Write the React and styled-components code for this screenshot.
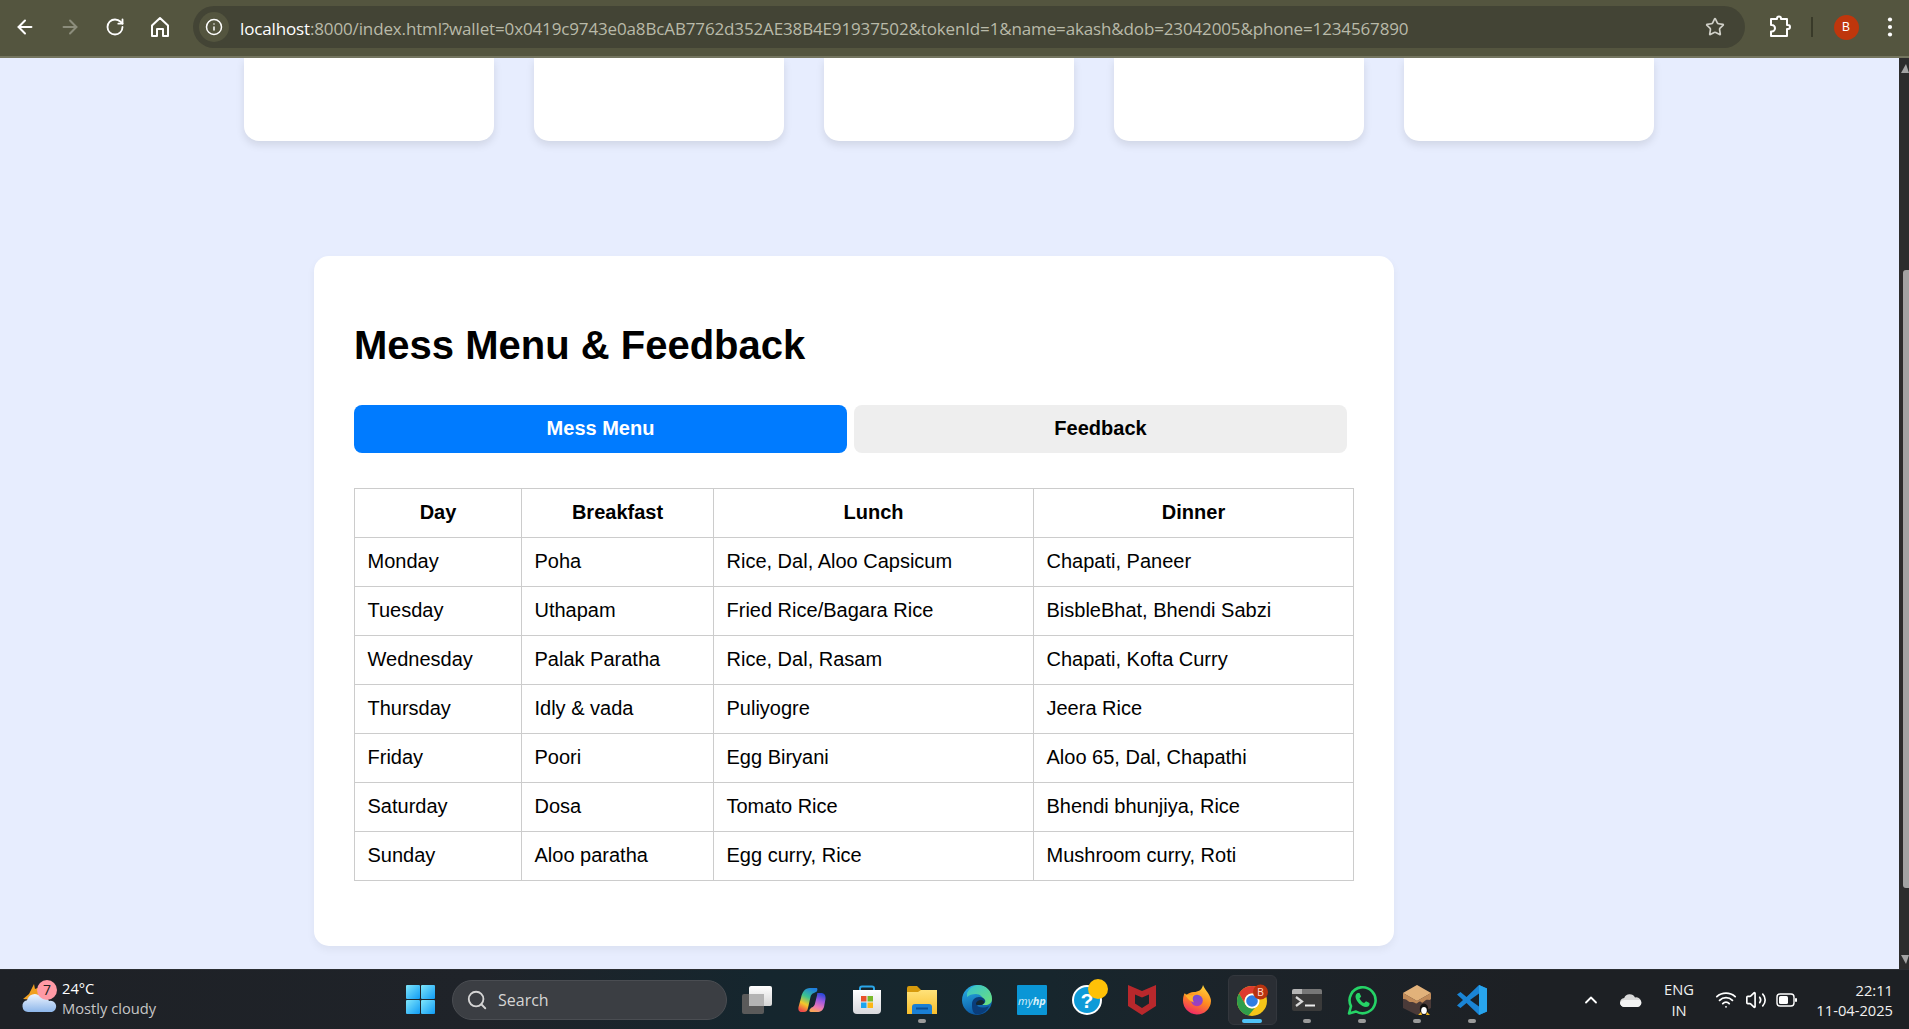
import React from "react";
import styled, { createGlobalStyle } from "styled-components";
import { ArrowLeft, ArrowRight, RotateCw, Info, Star, Search as SearchGlyph, ChevronUp, Wifi, Volume2 } from "lucide-react";

const Global = createGlobalStyle`
  html, body { margin: 0; padding: 0; height: 100%; overflow: hidden; }
  #root { height: 100%; }
  * { box-sizing: border-box; }
`;

const Shell = styled.div`
  width: 1909px; height: 1029px; display: flex; flex-direction: column;
  font-family: "Liberation Sans", Arial, sans-serif; background: #e7edfe;
`;

/* browser toolbar */
const Toolbar = styled.header`
  height: 58px; flex: none; display: flex; align-items: center; padding: 0 0 2px 2.5px;
  background: #54553f; border-bottom: 2px solid #74755f;
`;
const NavButton = styled.div`
  width: 45px; height: 40px; flex: none; display: flex; align-items: center; justify-content: center;
  color: ${p => (p.$dim ? "#8c8d7c" : "#ffffff")};
`;
const AddressBar = styled.div`
  width: 1552px; height: 42px; flex: none; margin-left: 10.5px; display: flex; align-items: center;
  border-radius: 21px; background: #434435; padding: 0 20px 0 6px;
`;
const SiteChip = styled.div`
  width: 30px; height: 30px; border-radius: 50%; background: #54553f; display: flex;
  align-items: center; justify-content: center; color: #fff; flex: none;
`;
const Url = styled.div`
  margin-left: 11px; flex: 1; white-space: nowrap; overflow: hidden; padding-top: 3px;
  font: 400 17px "Open Sans", sans-serif; letter-spacing: -0.14px; color: #b9baa9;
`;
const Host = styled.span` color: #ffffff; `;
const BarAction = styled.div`
  width: ${p => p.$w}px; height: 40px; flex: none; display: flex; align-items: center; justify-content: center;
  color: #fff; margin-left: ${p => p.$ml || 0}px;
`;
const Divider = styled.div` width: 2px; height: 20px; background: #393a29; flex: none; margin-left: 11px; `;
const Avatar = styled.div`
  width: 25px; height: 25px; border-radius: 50%; background: #bf360c; color: #fff;
  font: 400 12px "Liberation Sans", sans-serif; display: flex; align-items: center; justify-content: center;
`;

/* page */
const Viewport = styled.div` flex: 1; min-height: 0; display: flex; `;
const Page = styled.main` flex: 1; min-width: 0; overflow: hidden; background: #e7edfe; `;
const CardRow = styled.div` display: flex; gap: 40px; padding-left: 243.5px; `;
const StubCard = styled.div`
  width: 250px; height: 83px; background: #fff; border-radius: 0 0 15px 15px;
  box-shadow: 0 4px 8px rgba(0,0,0,0.1);
`;
const Panel = styled.section`
  width: 1080px; height: 690px; margin: 115px 0 0 314px; padding: 40px; background: #fff;
  border-radius: 15px; box-shadow: 0 4px 8px rgba(0,0,0,0.05);
`;
const Title = styled.h2`
  margin: 26px 0 37px; font: 700 40px/46px "Liberation Sans", Arial, sans-serif; color: #000;
`;
const Tabs = styled.div` display: flex; gap: 7px; `;
const Tab = styled.button`
  width: 493px; height: 48px; border: 0; border-radius: 8px; padding: 0 0 2px;
  font: 700 20px "Liberation Sans", Arial, sans-serif;
  background: ${p => (p.$active ? "#007bff" : "#eeeeee")};
  color: ${p => (p.$active ? "#ffffff" : "#000000")};
`;
const MenuTable = styled.table`
  width: 999px; margin-top: 35px; border-collapse: collapse; table-layout: fixed;
  font: 400 20px "Liberation Sans", Arial, sans-serif; color: #000;
`;
const HeadCell = styled.th`
  height: 49px; padding: 0 12.5px 1px; border: 1px solid #ccc; font-weight: 700; text-align: center;
`;
const Cell = styled.td`
  height: 49px; padding: 0 12.5px 1px; border: 1px solid #ccc; text-align: left;
`;

/* scrollbar */
const ScrollTrack = styled.aside`
  width: 10px; flex: none; background: #2c2c2c; display: flex; flex-direction: column;
  align-items: flex-end; padding-top: 6px;
`;
const ScrollArrow = styled.div`
  width: 0; height: 0; border-left: 5px solid transparent; border-right: 3px solid transparent;
  ${p => (p.$down ? "border-top: 9px solid #a3a3a3; margin-top: 67px;" : "border-bottom: 9px solid #a3a3a3;")}
`;
const ScrollThumb = styled.div`
  width: 6px; height: 618px; margin-top: 197px; background: #a3a3a3; border-radius: 3px 0 0 3px;
`;

/* taskbar */
const Taskbar = styled.footer`
  height: 60px; flex: none; display: flex; align-items: center; padding: 0 16px 0 22px; color: #fff;
  font-family: "Open Sans", sans-serif; border-top: 1px solid #2b2e33;
  background: linear-gradient(90deg, #1e2126 0%, #1f2329 25%, #15262e 40%, #17262d 55%, #1c2329 66%, #1d2024 80%, #1d2024 100%);
`;
const Weather = styled.div` width: 384px; flex: none; display: flex; align-items: center; gap: 2px; padding-bottom: 4px; `;
const WeatherText = styled.div` display: flex; flex-direction: column; font-size: 14.7px; line-height: 20px; `;
const Temp = styled.span` color: #fff; `;
const Cond = styled.span` color: #c6c6c6; `;
const Search = styled.div`
  width: 275px; height: 40px; flex: none; margin-left: 17px; border-radius: 20px; display: flex; align-items: center;
  gap: 10px; padding-left: 13px; background: #3b3e43; border: 1px solid #4a4d52; color: #d5d5d5; font-size: 16px;
`;
const Slots = styled.div` display: flex; flex: none; margin-left: 2.5px; `;
const Slot = styled.div`
  position: relative; width: 55px; height: 50px; flex: none; display: flex; align-items: center; justify-content: center;
  ${p => p.$active && `
    &::before { content: ""; position: absolute; left: 3px; right: 3px; top: 0; bottom: 0; border-radius: 6px;
      background: #2a2e34; border: 1px solid #33373d; }
  `}
  & > svg { position: relative; }
`;
const Dot = styled.span`
  position: absolute; left: 50%; bottom: 2px; transform: translateX(-50%); height: 4px; border-radius: 2px;
  width: ${p => (p.$active ? 20 : 8)}px; background: ${p => (p.$active ? "#4fc3f7" : "#9a9a9a")};
`;
const Tray = styled.div` margin-left: auto; display: flex; align-items: center; `;
const TrayIcon = styled.div`
  width: ${p => p.$w || 30}px; margin-left: ${p => p.$ml || 0}px; display: flex; justify-content: center; align-items: center; color: #fff;
`;
const Lang = styled.div`
  width: 40px; margin-left: 17px; text-align: center; font-size: 14.7px; line-height: 21px; color: #f0f0f0;
`;
const Clock = styled.div`
  width: 84px; margin-left: 12px; text-align: right; font-size: 14.7px; line-height: 20px; color: #f0f0f0;
`;

/* icon drawings */
const HomeIcon = () => (
  <svg width="20" height="22" viewBox="0 0 20 22" fill="none" stroke="#fff" strokeWidth="2" strokeLinejoin="round">
    <path d="M2 9.5 10 2l8 7.5V20h-5v-7H7v7H2z" />
  </svg>
);
const PuzzleIcon = () => (
  <svg width="24" height="24" viewBox="0 0 24 24" fill="none" stroke="#fff" strokeWidth="2" strokeLinejoin="round">
    <path d="M3 4h6V3.4a2 2 0 0 1 4 0V4h6v6h1a2 2 0 0 1 0 4h-1v7H3v-4.5h.8a3.2 3.2 0 0 0 0-6.4H3z" />
  </svg>
);
const Kebab = () => (
  <svg width="6" height="22" viewBox="0 0 6 22" fill="#fff"><circle cx="3" cy="3.5" r="2.1" /><circle cx="3" cy="11" r="2.1" /><circle cx="3" cy="18.5" r="2.1" /></svg>
);
const WeatherIcon = () => (
  <svg width="38" height="36" viewBox="0 0 38 36">
    <defs><linearGradient id="cl" x1="0" y1="0" x2="0" y2="1"><stop offset="0" stopColor="#eef5ff" /><stop offset="1" stopColor="#8db6ea" /></linearGradient></defs>
    <path d="M12 4 L13 9 L18 7 L20 14 L13 20 L1 19 L7 14 Z" fill="#f0a020" />
    <path d="M6 32a6 6 0 0 1-1-11.8A8 8 0 0 1 18 16a9 9 0 0 1 9 5 5.6 5.6 0 0 1 3 11z" fill="url(#cl)" />
    <circle cx="25" cy="10" r="10" fill="#ff9aa5" />
    <text x="25" y="15" textAnchor="middle" fontSize="14" fontFamily="Open Sans" fill="#222">7</text>
  </svg>
);
const StartLogo = () => (
  <svg width="29" height="29" viewBox="0 0 29 29">
    <defs><linearGradient id="st" x1="0" y1="0" x2="1" y2="1"><stop offset="0" stopColor="#7fe6fb" /><stop offset="1" stopColor="#0f9bf5" /></linearGradient></defs>
    <g fill="url(#st)">
      <rect x="0" y="0" width="14" height="14" rx="1" /><rect x="15" y="0" width="14" height="14" rx="1" />
      <rect x="0" y="15" width="14" height="14" rx="1" /><rect x="15" y="15" width="14" height="14" rx="1" />
    </g>
  </svg>
);
const TaskView = () => (
  <svg width="30" height="30" viewBox="0 0 30 30">
    <defs><linearGradient id="tv" x1="0" y1="0" x2="0" y2="1"><stop offset="0" stopColor="#fff" /><stop offset="1" stopColor="#d5d5d5" /></linearGradient></defs>
    <rect x="0" y="9" width="22" height="20" rx="2" fill="#5a5a5a" />
    <rect x="7" y="1" width="23" height="20" rx="2" fill="url(#tv)" />
    <rect x="7" y="9" width="15" height="12" fill="#b4b4b4" />
  </svg>
);
const Copilot = () => (
  <svg width="30" height="30" viewBox="0 0 30 30">
    <defs>
      <linearGradient id="cpa" x1="0.7" y1="0" x2="0.3" y2="1"><stop offset="0" stopColor="#1f7fe0" /><stop offset="0.4" stopColor="#3cc48e" /><stop offset="0.7" stopColor="#f5c92a" /><stop offset="1" stopColor="#ee4a4a" /></linearGradient>
      <linearGradient id="cpb" x1="0.7" y1="0" x2="0.4" y2="1"><stop offset="0" stopColor="#2647d8" /><stop offset="0.4" stopColor="#a25ade" /><stop offset="0.75" stopColor="#ee7ab0" /><stop offset="1" stopColor="#f8a45a" /></linearGradient>
    </defs>
    <path d="M13 3h6c2 0 1.500 2 .8 3.500L17 8c-2 .5-3 2-3.500 4L11 23c-.6 3-2 4-4 4H5C2 27 1 25 1.500 22L4 13C5 7 8 3 13 3z" fill="url(#cpa)" />
    <path d="M20 8h4c3 0 5 2 4.500 6l-1.500 8c-1 3-3 5-7 5h-6c-2 0-2-1.500-1-3l1.500-1.500c2-.5 3-2 3.500-4l2-8c.3-1.500 .5-2.500 0-2.500z" fill="url(#cpb)" />
  </svg>
);
const Store = () => (
  <svg width="30" height="30" viewBox="0 0 30 30">
    <defs><linearGradient id="sb" x1="0" y1="0" x2="0" y2="1"><stop offset="0" stopColor="#fff" /><stop offset="1" stopColor="#d8d8dc" /></linearGradient></defs>
    <path d="M8 7V3.500C8 2 9 1.500 10 1.500h10c1 0 2 .5 2 2V7" fill="none" stroke="#2aa6e8" strokeWidth="2" />
    <path d="M1 5h28v20a4 4 0 0 1-4 4H5a4 4 0 0 1-4-4z" fill="url(#sb)" />
    <rect x="9" y="11" width="5.500" height="5.500" fill="#e8512a" /><rect x="15.500" y="11" width="5.500" height="5.500" fill="#78b82a" />
    <rect x="9" y="17.500" width="5.500" height="5.500" fill="#1ea5ee" /><rect x="15.500" y="17.500" width="5.500" height="5.500" fill="#fcb614" />
  </svg>
);
const Files = () => (
  <svg width="30" height="30" viewBox="0 0 30 30">
    <defs><linearGradient id="fl" x1="0" y1="0" x2="0" y2="1"><stop offset="0" stopColor="#ffe27a" /><stop offset="1" stopColor="#f8be2c" /></linearGradient></defs>
    <path d="M0 3a2 2 0 0 1 2-2h8l4 4h14a2 2 0 0 1 2 2v3H0z" fill="#d69a0c" />
    <path d="M0 7h11l3-2h16v24H0z" fill="url(#fl)" />
    <path d="M5 29v-7a3 3 0 0 1 3-3h14a3 3 0 0 1 3 3v7z" fill="#1a7fd4" />
    <rect x="9" y="22.500" width="12" height="2" fill="#0b4f94" />
  </svg>
);
const Edge = () => (
  <svg width="30" height="30" viewBox="0 0 30 30">
    <defs>
      <linearGradient id="ed" x1="0" y1="0" x2="0.3" y2="1"><stop offset="0" stopColor="#2ab4e8" /><stop offset="1" stopColor="#0c5aa6" /></linearGradient>
      <linearGradient id="eg" x1="0" y1="0" x2="1" y2="1"><stop offset="0" stopColor="#35c1d1" /><stop offset="1" stopColor="#6ee27a" /></linearGradient>
    </defs>
    <circle cx="15" cy="15" r="15" fill="url(#ed)" />
    <path d="M5 8C8 2 13 0 16 0c8 0 14 6 14 14 0 4-3 6-7 6h-6c3-1 4-3 4-5 0-3-3-6-7-6-4 0-7 1-9 3z" fill="url(#eg)" />
    <path d="M10 19c0-4 3-7 7-7 3 0 5 1 6 3 1 2-1 4-3 5h-4c-1 0-1 1 0 1.500 3 1.500 7 1.500 11-.5-2 5-7 8.500-13 8.500-4-2-4-7-4-10.500z" fill="#0a3d7a" />
    <path d="M14 18c1-2 3-3 5-3s3 1 3 2-1 3-4 3h-3c-1 0-1-1-1-2z" fill="#15272f" />
  </svg>
);
const MyHp = () => (
  <svg width="30" height="30" viewBox="0 0 30 30">
    <rect width="30" height="30" rx="1" fill="#0a96d6" />
    <text x="15" y="19.500" textAnchor="middle" fontSize="11" fontFamily="Open Sans" fontStyle="italic" fill="#d8f0fa">my<tspan fontWeight="700">hp</tspan></text>
  </svg>
);
const Help = () => (
  <svg width="42" height="42" viewBox="0 0 42 42">
    <circle cx="21" cy="21" r="14" fill="#0e9bd8" stroke="#fff" strokeWidth="2" />
    <text x="21" y="28.500" textAnchor="middle" fontSize="21" fontWeight="700" fontFamily="Liberation Sans" fill="#fff">?</text>
    <circle cx="32" cy="10" r="10" fill="#ffc107" />
  </svg>
);
const McAfee = () => (
  <svg width="30" height="30" viewBox="0 0 30 30">
    <path d="M1 0l14 6 14-6v21l-14 9-14-9z" fill="#b8282c" />
    <path d="M8 9.500l7 3 7-3v9l-7 4.500-7-4.500z" fill="#1a252b" />
  </svg>
);
const Firefox = () => (
  <svg width="30" height="30" viewBox="0 0 30 30">
    <defs>
      <linearGradient id="ff" x1="0.7" y1="0" x2="0.3" y2="1"><stop offset="0" stopColor="#ffd33a" /><stop offset="0.5" stopColor="#ff8a1f" /><stop offset="1" stopColor="#f0246a" /></linearGradient>
      <linearGradient id="fp" x1="0" y1="0" x2="0" y2="1"><stop offset="0" stopColor="#6f4fd8" /><stop offset="1" stopColor="#a93bb8" /></linearGradient>
    </defs>
    <path d="M21 0c1 3 3 5 5 8 2 3 3 6 3 8a14 14 0 1 1-28-1c0-3 1-6 2-7l1 3c2-3 5-4 8-4 4 0 8-2 9-7z" fill="url(#ff)" />
    <circle cx="15" cy="15.500" r="5.800" fill="url(#fp)" />
    <path d="M2 9l8 1.500 6-2.500c-3 1-4.500 2.500-5 4-.6 2 0 4 1 5.500-3-1-6-3-7-5z" fill="#ffb02a" />
  </svg>
);
const Chrome = () => (
  <svg width="32" height="32" viewBox="-1 0 32 32">
    <circle cx="15" cy="17" r="15" fill="#f5c518" />
    <path d="M15 2a15 15 0 0 1 13 7.500H15a7.500 7.500 0 0 0-6.500 11.250L2 9.500A15 15 0 0 1 15 2z" fill="#de3b2f" />
    <path d="M2 9.500l6.500 11.250a7.500 7.500 0 0 0 9.500 3L11.500 31.600A15 15 0 0 1 2 9.500z" fill="#2f9e4a" />
    <circle cx="15" cy="17" r="7.500" fill="#fff" /><circle cx="15" cy="17" r="5.800" fill="#2f7de1" />
    <circle cx="23.500" cy="8" r="7.500" fill="#b8330f" />
    <text x="23.500" y="11.500" textAnchor="middle" fontSize="10" fontFamily="Liberation Sans" fill="#ffd9cc">B</text>
  </svg>
);
const Terminal = () => (
  <svg width="30" height="24" viewBox="0 0 30 24">
    <rect width="30" height="22" y="1" rx="2" fill="#3a3a3a" />
    <path d="M0 3a2 2 0 0 1 2-2h8v5H0z" fill="#b5b5b5" /><path d="M10 1h18a2 2 0 0 1 2 2v3H10z" fill="#777" />
    <path d="M4 9l6 4.500L4 18" fill="none" stroke="#d8d8d8" strokeWidth="2.200" />
    <rect x="13" y="16.500" width="10" height="2" fill="#ececec" />
  </svg>
);
const WhatsApp = () => (
  <svg width="30" height="30" viewBox="0 0 30 30">
    <path d="M2 28.500l2-7.300A13 13 0 1 1 9 26.500z" fill="none" stroke="#25d366" strokeWidth="2.600" strokeLinejoin="round" />
    <path d="M11 8c-1 0-2.500 1.500-2.500 3.500 0 4.500 6 10.500 10.500 10.500 2 0 3.500-1.500 3.500-2.500v-1.500l-3.500-1.700-1.800 1.800c-1.800-.6-4-3-4.700-4.700l1.700-1.800L12.500 8z" fill="#25d366" />
  </svg>
);
const Wsl = () => (
  <svg width="30" height="30" viewBox="0 0 30 30">
    <path d="M15 0l14 8v15l-14 7-14-7V8z" fill="#4a3a38" />
    <path d="M15 0l14 8-14 8L1 8z" fill="#e2b27a" />
    <path d="M1 8l14 8 14-8v6c-2 2-3 0-5 1-2 1-3 4-5 2-2-2-4 3-6 1-2-2-5 0-7-2-2-2-4-2-5-2z" fill="#c08a58" />
    <ellipse cx="22" cy="24" rx="4.200" ry="5.500" fill="#111" />
    <ellipse cx="22" cy="25.500" rx="2.800" ry="3.600" fill="#fff" />
    <path d="M16 30l3-3 1 3zM28 30l-3-3-1 3z" fill="#f5b81c" />
  </svg>
);
const VsCode = () => (
  <svg width="30" height="30" viewBox="0 0 30 30">
    <path d="M22 0l8 3.500v23L22 30 9.500 18 3.500 23 0 20.500 6 15 0 9.500 3.500 7l6 5z" fill="#1a85d6" />
    <path d="M22 0l8 3.500v23L22 30z" fill="#28a4ec" />
    <path d="M22 8.500 13 15l9 6.500z" fill="#1a2228" />
  </svg>
);
const Cloud = () => (
  <svg width="22" height="14" viewBox="0 0 22 14">
    <path d="M5 14a4.500 4.500 0 0 1-.8-9A6 6 0 0 1 15 4.500a4.800 4.800 0 0 1 2.500 9.500z" fill="#d9d9d9" />
    <path d="M0 10a5 5 0 0 1 5-3h15a4 4 0 0 1-2.500 7H5a5 5 0 0 1-5-4z" fill="#f4f4f4" />
  </svg>
);
const Battery = () => (
  <svg width="21" height="14" viewBox="0 0 21 14">
    <rect x="1" y="1" width="17" height="12" rx="3" fill="none" stroke="#fff" strokeWidth="1.400" />
    <rect x="3" y="3" width="9" height="8" rx="1.500" fill="#fff" />
    <rect x="19" y="5" width="2" height="4" rx="1" fill="#fff" />
  </svg>
);

const rows = [
  ["Monday", "Poha", "Rice, Dal, Aloo Capsicum", "Chapati, Paneer"],
  ["Tuesday", "Uthapam", "Fried Rice/Bagara Rice", "BisbleBhat, Bhendi Sabzi"],
  ["Wednesday", "Palak Paratha", "Rice, Dal, Rasam", "Chapati, Kofta Curry"],
  ["Thursday", "Idly & vada", "Puliyogre", "Jeera Rice"],
  ["Friday", "Poori", "Egg Biryani", "Aloo 65, Dal, Chapathi"],
  ["Saturday", "Dosa", "Tomato Rice", "Bhendi bhunjiya, Rice"],
  ["Sunday", "Aloo paratha", "Egg curry, Rice", "Mushroom curry, Roti"],
];
const headers = ["Day", "Breakfast", "Lunch", "Dinner"];
const colWidths = [167, 192, 320, 320];

const apps = [
  { key: "tv", Icon: TaskView },
  { key: "cp", Icon: Copilot },
  { key: "st", Icon: Store },
  { key: "fl", Icon: Files, dot: true },
  { key: "ed", Icon: Edge },
  { key: "hp", Icon: MyHp },
  { key: "he", Icon: Help },
  { key: "mc", Icon: McAfee },
  { key: "ff", Icon: Firefox },
  { key: "ch", Icon: Chrome, active: true },
  { key: "tm", Icon: Terminal, dot: true },
  { key: "wa", Icon: WhatsApp, dot: true },
  { key: "ws", Icon: Wsl, dot: true },
  { key: "vs", Icon: VsCode, dot: true },
];

export default function App() {
  return (
    <Shell>
      <Global />
      <Toolbar>
        <NavButton><ArrowLeft size={22} strokeWidth={2.2} /></NavButton>
        <NavButton $dim><ArrowRight size={22} strokeWidth={2.2} /></NavButton>
        <NavButton><RotateCw size={20} strokeWidth={2.2} /></NavButton>
        <NavButton><HomeIcon /></NavButton>
        <AddressBar>
          <SiteChip><Info size={18} strokeWidth={2} /></SiteChip>
          <Url><Host>localhost</Host>:8000/index.html?wallet=0x0419c9743e0a8BcAB7762d352AE38B4E91937502&amp;tokenId=1&amp;name=akash&amp;dob=23042005&amp;phone=1234567890</Url>
          <Star size={20} color="#d0d0c8" strokeWidth={2} />
        </AddressBar>
        <BarAction $w={40} $ml={15}><PuzzleIcon /></BarAction>
        <Divider />
        <BarAction $w={40} $ml={13}><Avatar>B</Avatar></BarAction>
        <BarAction $w={20} $ml={14}><Kebab /></BarAction>
      </Toolbar>

      <Viewport>
        <Page>
          <CardRow>
            {[0, 1, 2, 3, 4].map(i => <StubCard key={i} />)}
          </CardRow>
          <Panel>
            <Title>Mess Menu &amp; Feedback</Title>
            <Tabs>
              <Tab $active>Mess Menu</Tab>
              <Tab>Feedback</Tab>
            </Tabs>
            <MenuTable>
              <colgroup>
                {colWidths.map((w, i) => <col key={i} width={w} />)}
              </colgroup>
              <thead>
                <tr>{headers.map(h => <HeadCell key={h}>{h}</HeadCell>)}</tr>
              </thead>
              <tbody>
                {rows.map(r => (
                  <tr key={r[0]}>{r.map(c => <Cell key={c}>{c}</Cell>)}</tr>
                ))}
              </tbody>
            </MenuTable>
          </Panel>
        </Page>
        <ScrollTrack>
          <ScrollArrow />
          <ScrollThumb />
          <ScrollArrow $down />
        </ScrollTrack>
      </Viewport>

      <Taskbar>
        <Weather>
          <WeatherIcon />
          <WeatherText>
            <Temp>24°C</Temp>
            <Cond>Mostly cloudy</Cond>
          </WeatherText>
        </Weather>
        <StartLogo />
        <Search><SearchGlyph size={22} strokeWidth={2} />Search</Search>
        <Slots>
          {apps.map(({ key, Icon, dot, active }) => (
            <Slot key={key} $active={active}>
              <Icon />
              {(dot || active) && <Dot $active={active} />}
            </Slot>
          ))}
        </Slots>
        <Tray>
          <TrayIcon $w={20}><ChevronUp size={20} strokeWidth={2.2} /></TrayIcon>
          <TrayIcon $w={22} $ml={19}><Cloud /></TrayIcon>
          <Lang>ENG<br />IN</Lang>
          <TrayIcon $w={22} $ml={16}><Wifi size={23} strokeWidth={2} /></TrayIcon>
          <TrayIcon $w={22} $ml={8}><Volume2 size={22} strokeWidth={1.8} /></TrayIcon>
          <TrayIcon $w={22} $ml={8}><Battery /></TrayIcon>
          <Clock>22:11<br />11-04-2025</Clock>
        </Tray>
      </Taskbar>
    </Shell>
  );
}
